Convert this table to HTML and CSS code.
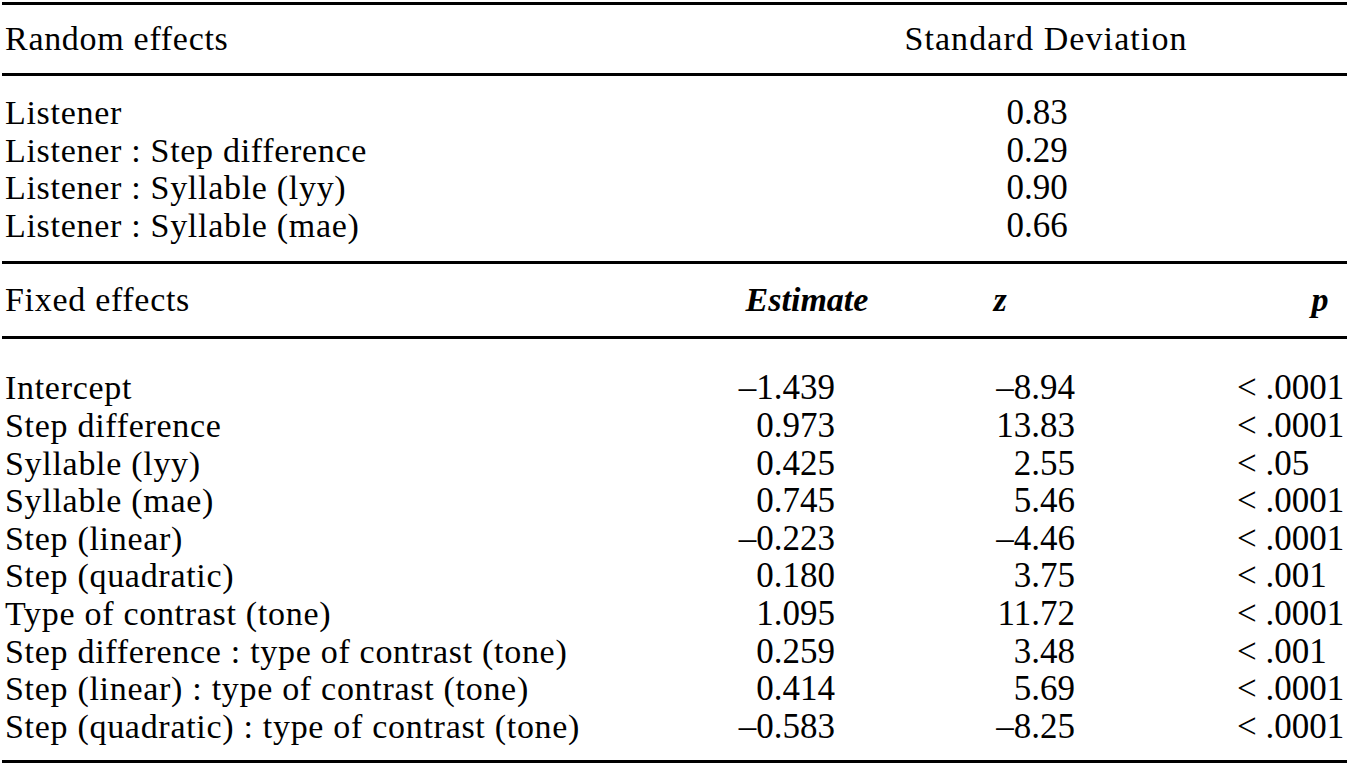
FILE: index.html
```html
<!DOCTYPE html>
<html>
<head>
<meta charset="utf-8">
<link rel="stylesheet" href="styles.css">
</head>
<body>
<div class="table">
  <div class="rule"></div>
  <div class="head-random">
    <div class="label">Random effects</div>
    <div class="sd-head">Standard Deviation</div>
    <div></div>
  </div>
  <div class="rule"></div>
  <div class="body-random">
    <div class="label">Listener</div><div class="sd">0.83</div><div></div>
    <div class="label">Listener : Step difference</div><div class="sd">0.29</div><div></div>
    <div class="label">Listener : Syllable (lyy)</div><div class="sd">0.90</div><div></div>
    <div class="label">Listener : Syllable (mae)</div><div class="sd">0.66</div><div></div>
  </div>
  <div class="rule"></div>
  <div class="head-fixed">
    <div class="label">Fixed effects</div>
    <div class="h-est">Estimate</div>
    <div class="h-z">z</div>
    <div></div>
    <div class="h-p">p</div>
  </div>
  <div class="rule"></div>
  <div class="body-fixed">
    <div class="label">Intercept</div><div class="num">&ndash;1.439</div><div class="num">&ndash;8.94</div><div class="pv">&lt; .0001</div>
    <div class="label">Step difference</div><div class="num">0.973</div><div class="num">13.83</div><div class="pv">&lt; .0001</div>
    <div class="label">Syllable (lyy)</div><div class="num">0.425</div><div class="num">2.55</div><div class="pv">&lt; .05</div>
    <div class="label">Syllable (mae)</div><div class="num">0.745</div><div class="num">5.46</div><div class="pv">&lt; .0001</div>
    <div class="label">Step (linear)</div><div class="num">&ndash;0.223</div><div class="num">&ndash;4.46</div><div class="pv">&lt; .0001</div>
    <div class="label">Step (quadratic)</div><div class="num">0.180</div><div class="num">3.75</div><div class="pv">&lt; .001</div>
    <div class="label">Type of contrast (tone)</div><div class="num">1.095</div><div class="num">11.72</div><div class="pv">&lt; .0001</div>
    <div class="label">Step difference : type of contrast (tone)</div><div class="num">0.259</div><div class="num">3.48</div><div class="pv">&lt; .001</div>
    <div class="label">Step (linear) : type of contrast (tone)</div><div class="num">0.414</div><div class="num">5.69</div><div class="pv">&lt; .0001</div>
    <div class="label">Step (quadratic) : type of contrast (tone)</div><div class="num">&ndash;0.583</div><div class="num">&ndash;8.25</div><div class="pv">&lt; .0001</div>
  </div>
  <div class="rule"></div>
</div>
</body>
</html>
```
FILE: styles.css
```css
html, body {
  margin: 0;
  padding: 0;
  background: #ffffff;
}
body {
  font-family: "Liberation Serif", "Times New Roman", serif;
  font-size: 34px;
  color: #000000;
}
.table {
  margin: 2px 2px 0 2px;
  width: 1345px;
}
.rule {
  height: 3px;
  background: #000000;
}
.label {
  padding-left: 3px;
  white-space: nowrap;
  letter-spacing: 0.7px;
}
.head-random {
  display: grid;
  grid-template-columns: 1fr 300px 151px;
  height: 68px;
  align-items: center;
}
.sd-head {
  text-align: center;
  letter-spacing: 1.1px;
}
.body-random {
  display: grid;
  grid-template-columns: 1fr 200px 210px;
  grid-auto-rows: 37.6px;
  line-height: 37.6px;
  padding-top: 18px;
  padding-bottom: 17px;
}
.sd {
  text-align: center;
  font-size: 35px;
}
.head-fixed {
  display: grid;
  grid-template-columns: 1fr 200px 186px 200px 54px;
  height: 72px;
  align-items: center;
}
.h-est, .h-z, .h-p {
  text-align: center;
  font-style: italic;
  font-weight: bold;
}
.body-fixed {
  display: grid;
  grid-template-columns: 1fr 190px 240px 272px;
  grid-auto-rows: 37.6px;
  line-height: 37.6px;
  padding-top: 30px;
  padding-bottom: 15px;
}
.num {
  text-align: right;
  white-space: nowrap;
  font-size: 35px;
}
.pv {
  padding-left: 162px;
  white-space: nowrap;
  font-size: 35px;
}
```
